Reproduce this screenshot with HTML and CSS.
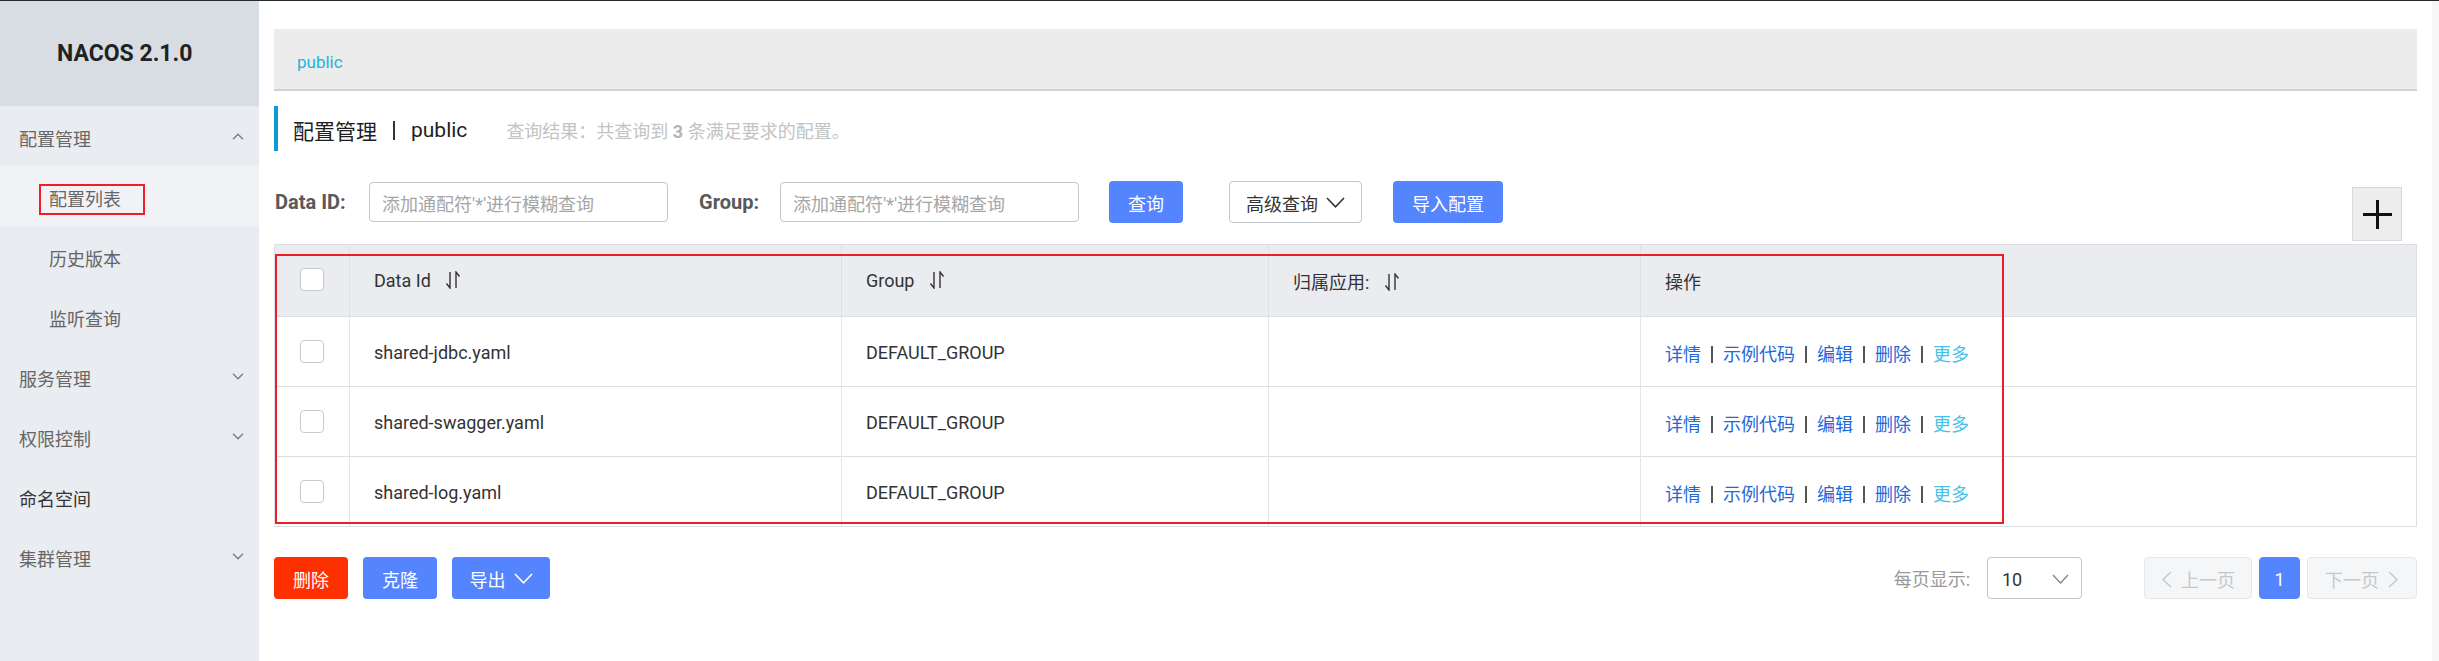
FILE: index.html
```html
<!DOCTYPE html>
<html lang="zh-CN">
<head>
<meta charset="utf-8">
<title>Nacos 配置列表</title>
<link rel="stylesheet" href="styles.css">
</head>
<body>
<div class="app">
  <aside class="sidebar">
    <div class="logo">NACOS 2.1.0</div>
    <ul class="menu">
      <li class="menu-item"><span class="menu-text">配置管理</span>
        <svg class="chev" width="12" height="7" viewBox="0 0 12 7"><path d="M1 6.2L6 1.2l5 5" fill="none" stroke="#7a7a7a" stroke-width="1.3"/></svg></li>
      <li class="menu-item sub active"><span class="menu-text annot">配置列表</span></li>
      <li class="menu-item sub"><span class="menu-text">历史版本</span></li>
      <li class="menu-item sub"><span class="menu-text">监听查询</span></li>
      <li class="menu-item"><span class="menu-text">服务管理</span>
        <svg class="chev" width="12" height="7" viewBox="0 0 12 7"><path d="M1 0.8l5 5 5-5" fill="none" stroke="#7a7a7a" stroke-width="1.3"/></svg></li>
      <li class="menu-item"><span class="menu-text">权限控制</span>
        <svg class="chev" width="12" height="7" viewBox="0 0 12 7"><path d="M1 0.8l5 5 5-5" fill="none" stroke="#7a7a7a" stroke-width="1.3"/></svg></li>
      <li class="menu-item leaf"><span class="menu-text">命名空间</span></li>
      <li class="menu-item"><span class="menu-text">集群管理</span>
        <svg class="chev" width="12" height="7" viewBox="0 0 12 7"><path d="M1 0.8l5 5 5-5" fill="none" stroke="#7a7a7a" stroke-width="1.3"/></svg></li>
    </ul>
  </aside>

  <main class="main">
    <div class="ns-bar"><span class="ns-link">public</span></div>

    <div class="title-bar">
      <span class="title-text">配置管理</span><span class="title-sep"></span><span class="title-text">public</span>
      <span class="title-summary">查询结果：共查询到 <b>3</b> 条满足要求的配置。</span>
    </div>

    <div class="toolbar">
      <div class="filters">
        <span class="label label-id">Data ID:</span>
        <div class="input">添加通配符'*'进行模糊查询</div>
        <span class="label label-group">Group:</span>
        <div class="input">添加通配符'*'进行模糊查询</div>
        <div class="btn btn-primary btn-query">查询</div>
        <div class="btn btn-adv">高级查询
          <svg class="btn-chev" width="19" height="11" viewBox="0 0 19 11"><path d="M1 1l8.5 8.8L18 1" fill="none" stroke="#333" stroke-width="1.6"/></svg>
        </div>
        <div class="btn btn-primary btn-import">导入配置</div>
      </div>
      <div class="add-btn">
        <svg width="29" height="29" viewBox="0 0 29 29"><path d="M14.5 0v29M0 14.5h29" stroke="#111" stroke-width="3"/></svg>
      </div>
    </div>

    <div class="table-wrap">
      <table class="table">
        <colgroup>
          <col class="c-check"><col class="c-id"><col class="c-group"><col class="c-app"><col>
        </colgroup>
        <thead>
          <tr>
            <th class="cell-check"><span class="checkbox"></span></th>
            <th>Data Id <svg class="sort" width="16" height="18" viewBox="0 0 16 18"><path d="M5 1v16L1.5 12.5M11 17V1l3.5 4.5" fill="none" stroke="#333" stroke-width="1.4"/></svg></th>
            <th>Group <svg class="sort" width="16" height="18" viewBox="0 0 16 18"><path d="M5 1v16L1.5 12.5M11 17V1l3.5 4.5" fill="none" stroke="#333" stroke-width="1.4"/></svg></th>
            <th>归属应用: <svg class="sort" width="16" height="18" viewBox="0 0 16 18"><path d="M5 1v16L1.5 12.5M11 17V1l3.5 4.5" fill="none" stroke="#333" stroke-width="1.4"/></svg></th>
            <th>操作</th>
          </tr>
        </thead>
        <tbody>
          <tr>
            <td class="cell-check"><span class="checkbox"></span></td>
            <td>shared-jdbc.yaml</td>
            <td>DEFAULT_GROUP</td>
            <td></td>
            <td class="actions"><span class="link">详情</span><span class="sep"></span><span class="link">示例代码</span><span class="sep"></span><span class="link">编辑</span><span class="sep"></span><span class="link">删除</span><span class="sep"></span><span class="link more">更多</span></td>
          </tr>
          <tr>
            <td class="cell-check"><span class="checkbox"></span></td>
            <td>shared-swagger.yaml</td>
            <td>DEFAULT_GROUP</td>
            <td></td>
            <td class="actions"><span class="link">详情</span><span class="sep"></span><span class="link">示例代码</span><span class="sep"></span><span class="link">编辑</span><span class="sep"></span><span class="link">删除</span><span class="sep"></span><span class="link more">更多</span></td>
          </tr>
          <tr>
            <td class="cell-check"><span class="checkbox"></span></td>
            <td>shared-log.yaml</td>
            <td>DEFAULT_GROUP</td>
            <td></td>
            <td class="actions"><span class="link">详情</span><span class="sep"></span><span class="link">示例代码</span><span class="sep"></span><span class="link">编辑</span><span class="sep"></span><span class="link">删除</span><span class="sep"></span><span class="link more">更多</span></td>
          </tr>
        </tbody>
      </table>
      <div class="annot-box"></div>
    </div>

    <div class="footer">
      <div class="footer-left">
        <div class="btn btn-danger">删除</div>
        <div class="btn btn-primary btn-clone">克隆</div>
        <div class="btn btn-primary btn-export">导出
          <svg class="btn-chev" width="19" height="11" viewBox="0 0 19 11"><path d="M1 1l8.5 8.8L18 1" fill="none" stroke="#fff" stroke-width="1.6"/></svg>
        </div>
      </div>
      <div class="pager">
        <span class="size-label">每页显示:</span>
        <div class="select"><span>10</span>
          <svg width="17" height="10" viewBox="0 0 17 10"><path d="M1 1l7.5 8L16 1" fill="none" stroke="#888" stroke-width="1.4"/></svg>
        </div>
        <div class="pg-btn pg-prev">
          <svg width="11" height="17" viewBox="0 0 11 17"><path d="M10 1L2 8.5 10 16" fill="none" stroke="#c9c9c9" stroke-width="1.6"/></svg>
          <span>上一页</span>
        </div>
        <div class="pg-btn pg-cur">1</div>
        <div class="pg-btn pg-next">
          <span>下一页</span>
          <svg width="11" height="17" viewBox="0 0 11 17"><path d="M1 1l8 7.5L1 16" fill="none" stroke="#c9c9c9" stroke-width="1.6"/></svg>
        </div>
      </div>
    </div>
  </main>

  <div class="scrollbar"></div>
</div>
</body>
</html>
```

FILE: styles.css
```css
* { box-sizing: border-box; }

html, body {
  margin: 0;
  padding: 0;
}

body {
  font-family: Roboto, "Noto Sans CJK SC", sans-serif;
  font-size: 18px;
  color: #333;
  background: #fff;
  border-top: 1px solid #24292d;
}

.app {
  display: flex;
  height: 660px;
}

/* ---------- sidebar ---------- */
.sidebar {
  width: 259px;
  flex: none;
  background: #e9ecf1;
}

.logo {
  height: 105px;
  background: #d8dde3;
  display: flex;
  align-items: center;
  padding-left: 57px;
  font-size: 23px;
  font-weight: 700;
  color: #222;
}

.menu {
  list-style: none;
  margin: 0;
  padding: 0;
}

.menu-item {
  height: 60px;
  display: flex;
  align-items: center;
  justify-content: space-between;
  padding: 0 15px 0 19px;
  color: #666;
  font-size: 18px;
  line-height: 24px;
}

.menu-text {
  padding-top: 7px;
}

.menu-item.sub {
  padding-left: 49px;
}

.menu-item.active {
  background: #f1f2f6;
}

.menu-item.leaf {
  color: #333;
}

.annot {
  position: relative;
}

.annot::after {
  content: "";
  position: absolute;
  left: -10px;
  top: 3px;
  width: 102px;
  height: 27px;
  border: 2px solid #e8202a;
}

/* ---------- main ---------- */
.main {
  flex: 1;
  min-width: 0;
  padding: 28px 15px 0 15px;
}

.ns-bar {
  height: 62px;
  background: #ececec;
  border-bottom: 2px solid #d2d2d2;
  padding: 5px 0 0 23px;
  display: flex;
  align-items: center;
  font-size: 17px;
}

.ns-link {
  color: #1bb5e0;
}

.title-bar {
  margin-top: 15px;
  height: 45px;
  border-left: 4px solid #0f9ad3;
  padding: 2px 0 0 15px;
  display: flex;
  align-items: center;
  font-size: 21px;
  color: #1e1e1e;
}

.title-sep {
  width: 2px;
  height: 19px;
  margin: 2px 16px 0 16px;
  background: #333;
}

.title-summary {
  margin-left: 39px;
  font-size: 18px;
  color: #c3c3c3;
}

.title-summary b {
  color: #b5b5b5;
}

/* ---------- toolbar ---------- */
.toolbar {
  margin-top: 30px;
  display: flex;
  justify-content: space-between;
  align-items: flex-start;
}

.filters {
  display: flex;
  align-items: center;
  height: 42px;
  padding-left: 1px;
}

.label {
  font-size: 20px;
  font-weight: 700;
  color: #595959;
}

.label-id { width: 94px; }

.label-group {
  width: 81px;
  margin-left: 31px;
}

.input {
  width: 299px;
  height: 40px;
  border: 1px solid #c4c6cf;
  border-radius: 4px;
  padding: 2px 0 0 12px;
  display: flex;
  align-items: center;
  color: #a6a6a6;
}

.btn {
  height: 42px;
  border-radius: 4px;
  display: flex;
  align-items: center;
  justify-content: center;
  padding-top: 2px;
}

.btn-primary {
  background: #5584ff;
  color: #fff;
}

.btn-query {
  width: 74px;
  margin-left: 30px;
}

.btn-adv {
  width: 133px;
  margin-left: 46px;
  background: #fff;
  border: 1px solid #c4c6cf;
  color: #333;
}

.btn-chev {
  margin-left: 8px;
  margin-top: -1px;
}

.btn-import {
  width: 110px;
  margin-left: 31px;
}

.add-btn {
  width: 50px;
  height: 54px;
  margin-top: 6px;
  margin-right: 15px;
  background: #ededed;
  border: 1px solid #d9d9d9;
  display: flex;
  align-items: center;
  justify-content: center;
}

/* ---------- table ---------- */
.table-wrap {
  position: relative;
  margin-top: 3px;
}

.table {
  width: 100%;
  border-collapse: collapse;
  table-layout: fixed;
  border: 1px solid #dcdee3;
}

.c-check { width: 75px; }
.c-id { width: 492px; }
.c-group { width: 427px; }
.c-app { width: 372px; }

.table th {
  height: 72px;
  background: #ebecf0;
  font-weight: 400;
  text-align: left;
  padding: 0 24px 0 24px;
  border-left: 1px solid #dfe0e5;
  color: #333;
  white-space: nowrap;
}

.table td {
  height: 70px;
  padding: 2px 24px 0 24px;
  border-top: 1px solid #dcdee3;
  border-left: 1px solid #e4e5e9;
  color: #333;
  white-space: nowrap;
}

.table .cell-check {
  padding: 0;
  text-align: center;
}

.checkbox {
  display: inline-block;
  vertical-align: middle;
  width: 24px;
  height: 23px;
  border: 1px solid #c8cad0;
  border-radius: 4px;
  background: #fff;
}

.table th .checkbox {
  margin-top: -6px;
}

.sort {
  vertical-align: middle;
  margin-left: 10px;
  margin-top: -4px;
}

.actions .link {
  color: #2468d8;
}

.actions .more {
  color: #45c2ea;
}

.actions .sep {
  display: inline-block;
  vertical-align: middle;
  width: 2px;
  height: 17px;
  margin: -3px 10px 0 10px;
  background: #555;
}

.annot-box {
  position: absolute;
  left: 1px;
  top: 10px;
  width: 1729px;
  height: 270px;
  border: 2px solid #e8202a;
  pointer-events: none;
}

/* ---------- footer ---------- */
.footer {
  margin-top: 30px;
  display: flex;
  justify-content: space-between;
  align-items: center;
}

.footer-left {
  display: flex;
}

.btn-danger {
  width: 74px;
  background: #ff3000;
  color: #fff;
}

.btn-clone {
  width: 74px;
  margin-left: 15px;
}

.btn-export {
  width: 98px;
  margin-left: 15px;
}

.pager {
  display: flex;
  align-items: center;
}

.size-label {
  color: #999;
  margin-right: 17px;
}

.select {
  width: 95px;
  height: 42px;
  border: 1px solid #c4c6cf;
  border-radius: 4px;
  padding: 2px 12px 0 14px;
  display: flex;
  justify-content: space-between;
  align-items: center;
  color: #333;
}

.pg-btn {
  height: 42px;
  border: 1px solid #e6e7eb;
  background: #f5f6f8;
  color: #c6c6c6;
  border-radius: 4px;
  display: flex;
  align-items: center;
  justify-content: center;
  gap: 9px;
  padding-top: 2px;
}

.pg-prev {
  width: 108px;
  margin-left: 62px;
}

.pg-cur {
  width: 41px;
  margin-left: 7px;
  background: #5584ff;
  border-color: #5584ff;
  color: #fff;
}

.pg-next {
  width: 110px;
  margin-left: 7px;
}

/* ---------- scrollbar strip ---------- */
.scrollbar {
  width: 7px;
  flex: none;
  background: #f6f6f6;
}
```
